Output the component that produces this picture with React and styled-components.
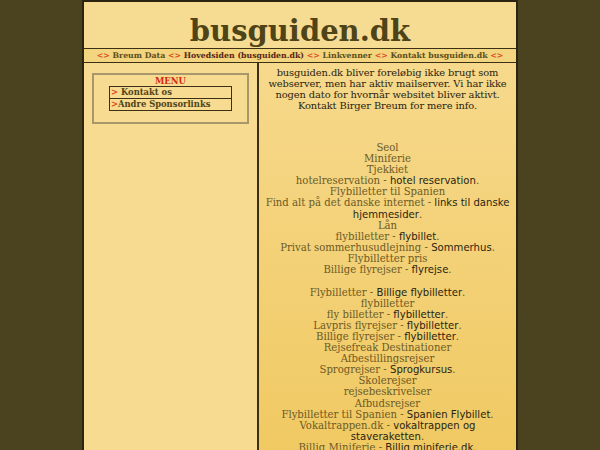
import React from "react";
import styled, { createGlobalStyle } from "styled-components";

const Global = createGlobalStyle`
	html, body {
		margin: 0;
		padding: 0;
		background: #4b4220;
		font-family: "DejaVu Serif", serif;
	}
`;

const Page = styled.div`
	width: 432px;
	margin: 0 auto;
	min-height: 450px;
	border-left: 2px solid #2b2410;
	border-right: 2px solid #2b2410;
	border-top: 2px solid #2b2410;
	background: #f6dc92;
	display: flex;
	flex-direction: column;
`;

const Header = styled.h1`
	margin: 0;
	height: 46px;
	display: flex;
	align-items: flex-end;
	justify-content: center;
	font-size: 29px;
	font-weight: bold;
	color: #4f4418;
	line-height: 1;
	padding-bottom: 2px;
	box-sizing: border-box;
`;

const Nav = styled.div`
	border-top: 1px solid #3a3015;
	border-bottom: 1px solid #3a3015;
	background: #f2d57e;
	text-align: center;
	font-size: 7.8px;
	font-weight: bold;
	color: #5c4e1c;
	height: 13px;
	line-height: 13px;
	white-space: nowrap;
`;

const Sep = styled.span`
	color: #e0441a;
`;

const NavLink = styled.span`
	color: ${(p) => (p.$active ? "#5a2410" : "#5c4e1c")};
`;

const Body = styled.div`
	display: flex;
	flex: 1;
`;

const Left = styled.div`
	width: 175px;
	background: #f6db90;
	border-right: 2px solid #3a3015;
	padding: 10px 8px 0 8px;
	box-sizing: border-box;
`;

const MenuBox = styled.div`
	border: 2px solid #a8976a;
	padding: 1px 0 11px 0;
	display: flex;
	flex-direction: column;
	align-items: center;
`;

const MenuTitle = styled.div`
	color: #d42a10;
	font-weight: bold;
	font-size: 8.5px;
	line-height: 10px;
`;

const MenuTable = styled.div`
	width: 123px;
	border: 1px solid #3a3015;
	border-bottom: none;
	box-sizing: border-box;
`;

const MenuRow = styled.div`
	border-bottom: 1px solid #3a3015;
	font-size: 8.4px;
	font-weight: bold;
	color: #4f4418;
	line-height: 11px;
	padding-left: 1px;
	white-space: nowrap;
`;

const Arrow = styled.span`
	color: #e0441a;
`;

const Right = styled.div`
	flex: 1;
	background: linear-gradient(to bottom, #f6d98c, #f0c962);
	padding: 4px 4px 0 4px;
	text-align: center;
	font-size: 10.1px;
	line-height: 11.1px;
`;

const Intro = styled.p`
	margin: 0 -2px 31px -2px;
	color: #2b2410;
	font-size: 9.9px;
	letter-spacing: -0.1px;
	line-height: 11px;
`;

const List = styled.div`
	color: #6c5a26;
`;

const Item = styled.div``;

const Strong = styled.span`
	font-family: "DejaVu Sans", sans-serif;
	color: #2b2410;
`;

const Gap = styled.div`
	height: 11.5px;
`;

const items = [
	["Seol"],
	["Miniferie"],
	["Tjekkiet"],
	["hotelreservation", "hotel reservation"],
	["Flybilletter til Spanien"],
	["Find alt på det danske internet", "links til danske hjemmesider"],
	["Lån"],
	["flybilletter", "flybillet"],
	["Privat sommerhusudlejning", "Sommerhus"],
	["Flybilletter pris"],
	["Billige flyrejser", "flyrejse"],
	null,
	["Flybilletter", "Billige flybilletter"],
	["flybilletter"],
	["fly billetter", "flybilletter"],
	["Lavpris flyrejser", "flybilletter"],
	["Billige flyrejser", "flybilletter"],
	["Rejsefreak Destinationer"],
	["Afbestillingsrejser"],
	["Sprogrejser", "Sprogkursus"],
	["Skolerejser"],
	["rejsebeskrivelser"],
	["Afbudsrejser"],
	["Flybilletter til Spanien", "Spanien Flybillet"],
	["Vokaltrappen.dk", "vokaltrappen og staveraketten"],
	["Billig Miniferie", "Billig miniferie.dk"],
];

const App = () => {
	const nav = ["Breum Data", "Hovedsiden (busguiden.dk)", "Linkvenner", "Kontakt busguiden.dk"];
	return (
		<>
			<Global />
			<Page>
				<Header>busguiden.dk</Header>
				<Nav>
					<Sep>&lt;&gt;</Sep>
					{nav.map((n, i) => (
						<React.Fragment key={n}>
							{" "}
							<NavLink $active={i === 1}>{n}</NavLink> <Sep>&lt;&gt;</Sep>
						</React.Fragment>
					))}
				</Nav>
				<Body>
					<Left>
						<MenuBox>
							<MenuTitle>MENU</MenuTitle>
							<MenuTable>
								<MenuRow>
									<Arrow>&gt;</Arrow> Kontakt os
								</MenuRow>
								<MenuRow>
									<Arrow>&gt;</Arrow>Andre Sponsorlinks
								</MenuRow>
							</MenuTable>
						</MenuBox>
					</Left>
					<Right>
						<Intro>
							busguiden.dk bliver foreløbig ikke brugt som webserver, men har aktiv mailserver. Vi har ikke
							nogen dato for hvornår websitet bliver aktivt. Kontakt Birger Breum for mere info.
						</Intro>
						<List>
							{items.map((it, i) =>
								it === null ? (
									<Gap key={i} />
								) : (
									<Item key={i}>
										{it[0]}
										{it[1] && (
											<>
												{" - "}
												<Strong>{it[1]}</Strong>.
											</>
										)}
									</Item>
								)
							)}
						</List>
					</Right>
				</Body>
			</Page>
		</>
	);
};

export default App;
